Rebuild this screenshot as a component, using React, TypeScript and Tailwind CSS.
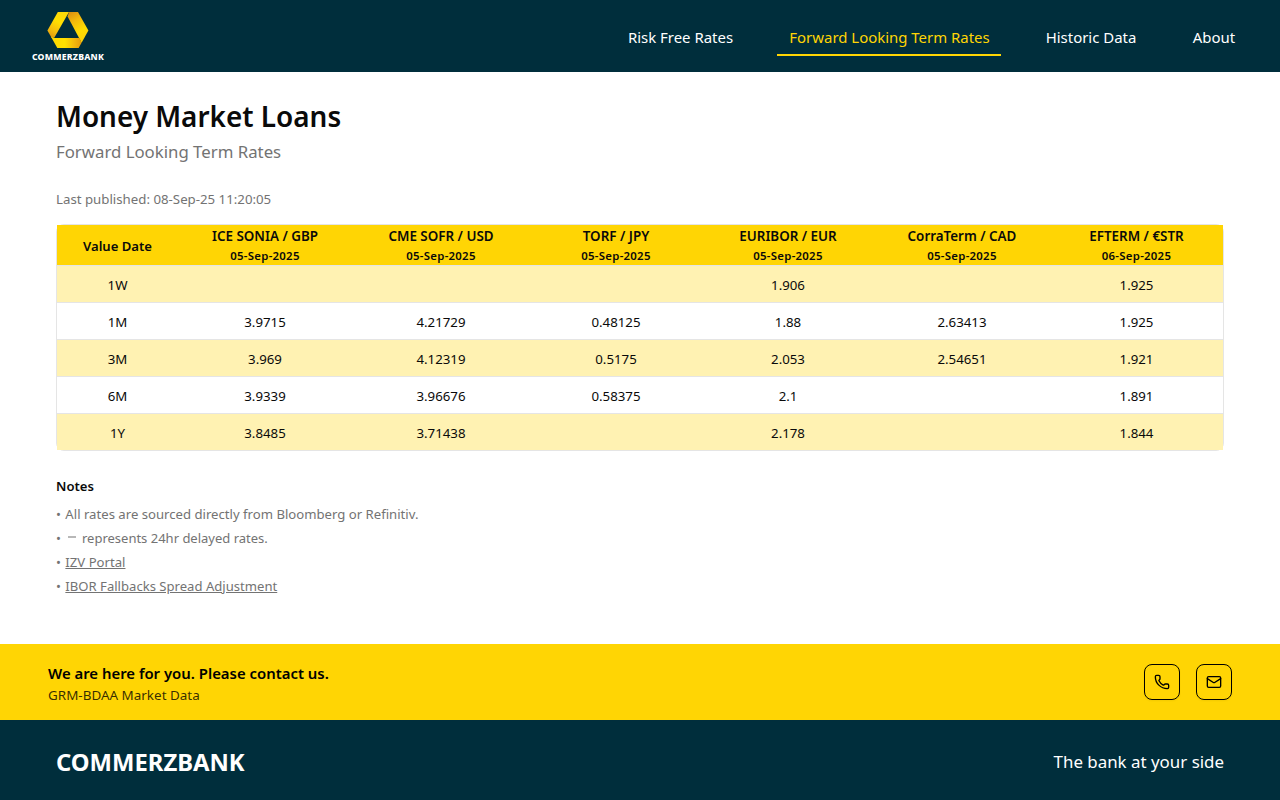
import { Mail, Phone } from "lucide-react";

const columns = [
  { name: "ICE SONIA / GBP", date: "05-Sep-2025" },
  { name: "CME SOFR / USD", date: "05-Sep-2025" },
  { name: "TORF / JPY", date: "05-Sep-2025" },
  { name: "EURIBOR / EUR", date: "05-Sep-2025" },
  { name: "CorraTerm / CAD", date: "05-Sep-2025" },
  { name: "EFTERM / €STR", date: "06-Sep-2025" },
];

const rows = [
  ["1W", "", "", "", "1.906", "", "1.925"],
  ["1M", "3.9715", "4.21729", "0.48125", "1.88", "2.63413", "1.925"],
  ["3M", "3.969", "4.12319", "0.5175", "2.053", "2.54651", "1.921"],
  ["6M", "3.9339", "3.96676", "0.58375", "2.1", "", "1.891"],
  ["1Y", "3.8485", "3.71438", "", "2.178", "", "1.844"],
];

function Logo() {
  return (
    <a href="#" className="flex w-[72px] flex-col items-center pt-[2px]">
      <svg width="42" height="36" viewBox="0 0 42 36">
        <defs>
          <linearGradient id="left" gradientUnits="userSpaceOnUse" x1="4" y1="27" x2="18" y2="2">
            <stop offset="0" stopColor="#dc9110" />
            <stop offset="0.3" stopColor="#f5bd0c" />
            <stop offset="0.65" stopColor="#ffe000" />
            <stop offset="1" stopColor="#fdd808" />
          </linearGradient>
          <linearGradient id="right" gradientUnits="userSpaceOnUse" x1="22" y1="1" x2="38" y2="29">
            <stop offset="0" stopColor="#dc9110" />
            <stop offset="0.3" stopColor="#f3b90c" />
            <stop offset="0.65" stopColor="#ffdc00" />
            <stop offset="1" stopColor="#fdd208" />
          </linearGradient>
          <linearGradient id="bottom" x1="0" y1="0" x2="1" y2="0">
            <stop offset="0" stopColor="#ffd800" />
            <stop offset="0.45" stopColor="#ffe100" />
            <stop offset="0.75" stopColor="#f3b90c" />
            <stop offset="1" stopColor="#e59a0c" />
          </linearGradient>
        </defs>
        <path d="M10.8 0H22L7.4 25.5 4.6 25.8 0.4 18.5Z" fill="url(#left)" />
        <path d="M22 0H31L41.4 18.5 34.6 30.8 20.6 4.6Z" fill="url(#right)" />
        <path d="M4 24.8 7.8 25.9H32.6L34.6 30.8 31.6 36H10.3Z" fill="url(#bottom)" />
      </svg>
      <span className="mt-[3px] font-['Noto_Sans'] text-[8.7px] leading-[12px] font-extrabold tracking-[0.22px] whitespace-nowrap text-white">COMMERZBANK</span>
    </a>
  );
}

export default function App() {
  return (
    <div className="flex h-[800px] flex-col bg-white font-['Noto_Sans','Open_Sans',sans-serif] text-[#0a0a0a]">
      <header className="flex h-[72px] items-center justify-between bg-[#002e3c] px-8">
        <Logo />
        <nav className="flex gap-8 text-[14.95px] text-white">
          <a href="#" className="flex h-10 w-[129px] items-center justify-center border-b-2 border-transparent pt-1 whitespace-nowrap">Risk Free Rates</a>
          <a href="#" className="flex h-10 w-[224px] items-center justify-center border-b-2 border-[#ffd504] pt-1 pl-px whitespace-nowrap text-[#ffd504]">Forward Looking Term Rates</a>
          <a href="#" className="flex h-10 w-[115px] items-center justify-center border-b-2 border-transparent pt-1 pl-px whitespace-nowrap">Historic Data</a>
          <a href="#" className="flex h-10 w-[68px] items-center justify-center border-b-2 border-transparent pt-1 whitespace-nowrap">About</a>
        </nav>
      </header>

      <main className="flex-1 px-14 pt-[26px]">
        <h1 className="text-[27.9px] leading-9 font-semibold">Money Market Loans</h1>
        <p className="mt-1 text-[16.8px] leading-7 text-[#737373]">Forward Looking Term Rates</p>
        <p className="mt-[23px] text-[13.25px] leading-5 text-[#737373]">Last published: 08-Sep-25 11:20:05</p>

        <div className="mt-[15px] rounded-lg border border-[#e5e5e5]">
          <table className="w-full table-fixed border-separate border-spacing-0 text-center">
            <colgroup>
              <col className="w-[121px]" />
              <col className="w-[174px]" />
              <col className="w-[178px]" />
              <col className="w-[172px]" />
              <col className="w-[172px]" />
              <col className="w-[176px]" />
              <col />
            </colgroup>
            <thead>
              <tr className="h-[41px] bg-[#ffd504]">
                <th className="border-b border-[#e5e5e5] px-0 pt-[2px] pb-0 text-[13.1px] leading-5 font-semibold">Value Date</th>
                {columns.map((c) => (
                  <th key={c.name} className="border-b border-[#e5e5e5] p-0 font-semibold">
                    <div className="text-[13.4px] leading-[22px]">{c.name}</div>
                    <div className="text-[11.4px] leading-[18px] tracking-[0.27px]">{c.date}</div>
                  </th>
                ))}
              </tr>
            </thead>
            <tbody className="text-[13.25px] leading-5">
              {rows.map((r, n) => (
                <tr key={r[0]} className={n === rows.length - 1 ? "h-9 bg-[#fff2b2]" : "h-[37px] odd:bg-[#fff2b2]"}>
                  {r.map((v, i) => (
                    <td key={i} className={n === rows.length - 1 ? "px-0 pt-[2px] pb-0" : "border-b border-[#e5e5e5] px-0 pt-[2px] pb-0"}>{v}</td>
                  ))}
                </tr>
              ))}
            </tbody>
          </table>
        </div>

        <h2 className="mt-[25px] text-[13.1px] leading-5 font-semibold">Notes</h2>
        <ul className="mt-2 flex flex-col gap-1 text-[13.15px] leading-5 text-[#737373]">
          <li>• <span className="ml-px">All rates are sourced directly from Bloomberg or Refinitiv.</span></li>
          <li className="flex items-center">
            <span>•</span>
            <span className="mr-[6px] ml-[7px] h-[2px] w-2 -translate-y-px bg-[#b8b8b8]" />
            <span className="text-[13px]">represents 24hr delayed rates.</span>
          </li>
          <li>• <a href="#" className="ml-px underline">IZV Portal</a></li>
          <li>• <a href="#" className="ml-px text-[13.1px] underline">IBOR Fallbacks Spread Adjustment</a></li>
        </ul>
      </main>

      <section className="flex h-[76px] items-center justify-between bg-[#ffd504] px-12 text-black">
        <div className="pt-[2px]">
          <p className="text-[14.9px] leading-6 font-semibold">We are here for you. Please contact us.</p>
          <p className="text-[13.45px] leading-5 text-black/80">GRM-BDAA Market Data</p>
        </div>
        <div className="flex gap-4">
          <button className="flex size-9 items-center justify-center rounded-lg border border-black shadow-xs"><Phone size={16} strokeWidth={2} /></button>
          <button className="flex size-9 items-center justify-center rounded-lg border border-black shadow-xs"><Mail size={16} strokeWidth={2} /></button>
        </div>
      </section>

      <footer className="flex h-20 items-center justify-between bg-[#002e3c] px-14 pt-1 text-white">
        <span className="text-[23.8px] leading-8 font-bold">COMMERZBANK</span>
        <span className="text-[16.9px] leading-7">The bank at your side</span>
      </footer>
    </div>
  );
}
